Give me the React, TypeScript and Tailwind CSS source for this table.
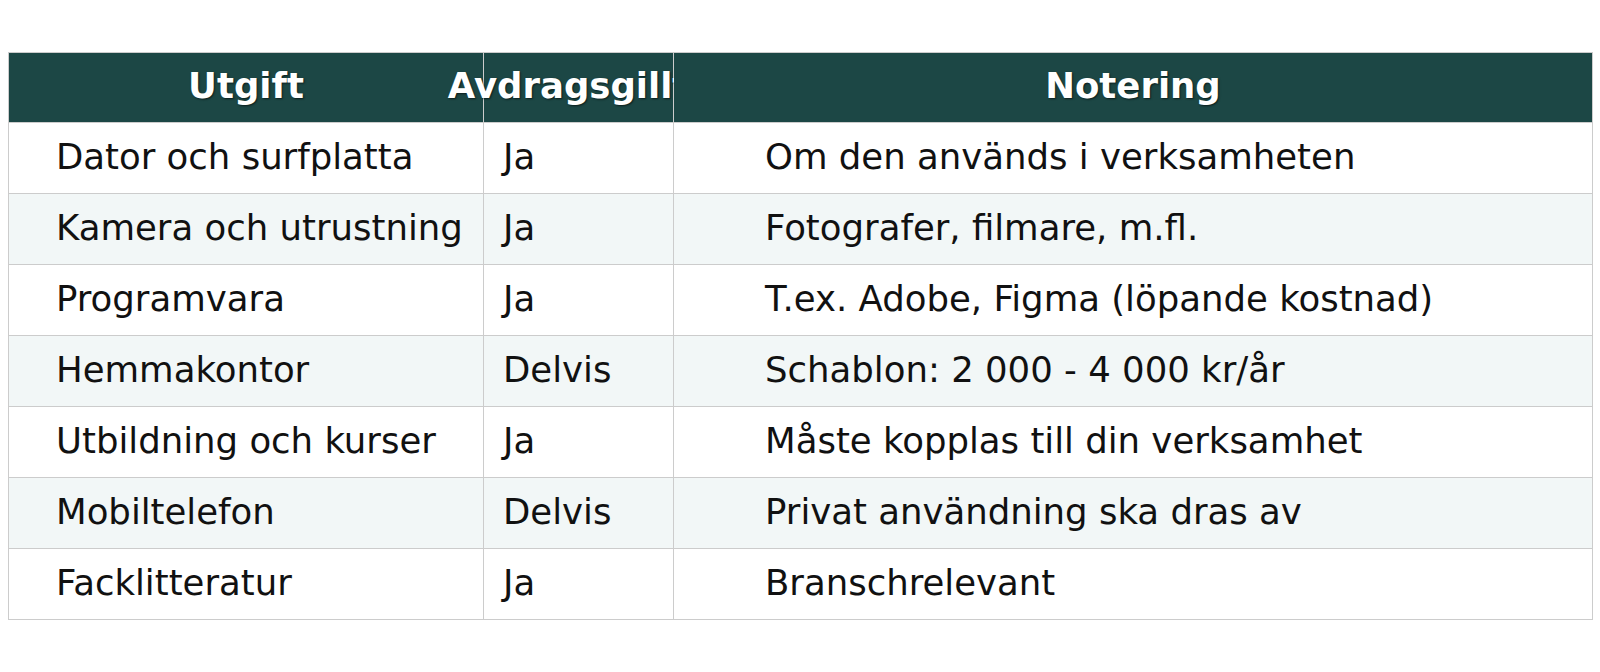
const rows = [
  { utgift: "Dator och surfplatta", avdrag: "Ja", notering: "Om den används i verksamheten" },
  { utgift: "Kamera och utrustning", avdrag: "Ja", notering: "Fotografer, filmare, m.fl." },
  { utgift: "Programvara", avdrag: "Ja", notering: "T.ex. Adobe, Figma (löpande kostnad)" },
  { utgift: "Hemmakontor", avdrag: "Delvis", notering: "Schablon: 2 000 - 4 000 kr/år" },
  { utgift: "Utbildning och kurser", avdrag: "Ja", notering: "Måste kopplas till din verksamhet" },
  { utgift: "Mobiltelefon", avdrag: "Delvis", notering: "Privat användning ska dras av" },
  { utgift: "Facklitteratur", avdrag: "Ja", notering: "Branschrelevant" },
];

const th =
  "h-[70px] border border-[#cccccc] bg-[#1c4745] p-0 pb-[3px] text-[35.5px] font-bold text-white [text-shadow:1px_1px_2px_rgba(0,0,0,0.6)]";
const td = "h-[71px] whitespace-nowrap border border-[#cccccc] pb-[2px] text-[35.5px]";

export default function App() {
  return (
    <div className="bg-white px-2 pt-[52px] font-['DejaVu_Sans',sans-serif] text-[#111]">
      <table className="w-[1584px] table-fixed border-collapse">
        <colgroup>
          <col className="w-[475px]" />
          <col className="w-[190px]" />
          <col className="w-[919px]" />
        </colgroup>
        <thead>
          <tr>
            <th className={th}>
              <div className="flex justify-center whitespace-nowrap">Utgift</div>
            </th>
            <th className={th}>
              <div className="flex justify-center whitespace-nowrap pr-[20px]">Avdragsgillt</div>
            </th>
            <th className={th + " relative"}>
              <div className="flex justify-center whitespace-nowrap">Notering</div>
            </th>
          </tr>
        </thead>
        <tbody>
          {rows.map((r, i) => (
            <tr key={r.utgift} className={i % 2 === 1 ? "bg-[#f2f7f7]" : "bg-white"}>
              <td className={td + " pl-[47px]"}>{r.utgift}</td>
              <td className={td + " pl-[19px]"}>{r.avdrag}</td>
              <td className={td + " pl-[91px]"}>{r.notering}</td>
            </tr>
          ))}
        </tbody>
      </table>
    </div>
  );
}
